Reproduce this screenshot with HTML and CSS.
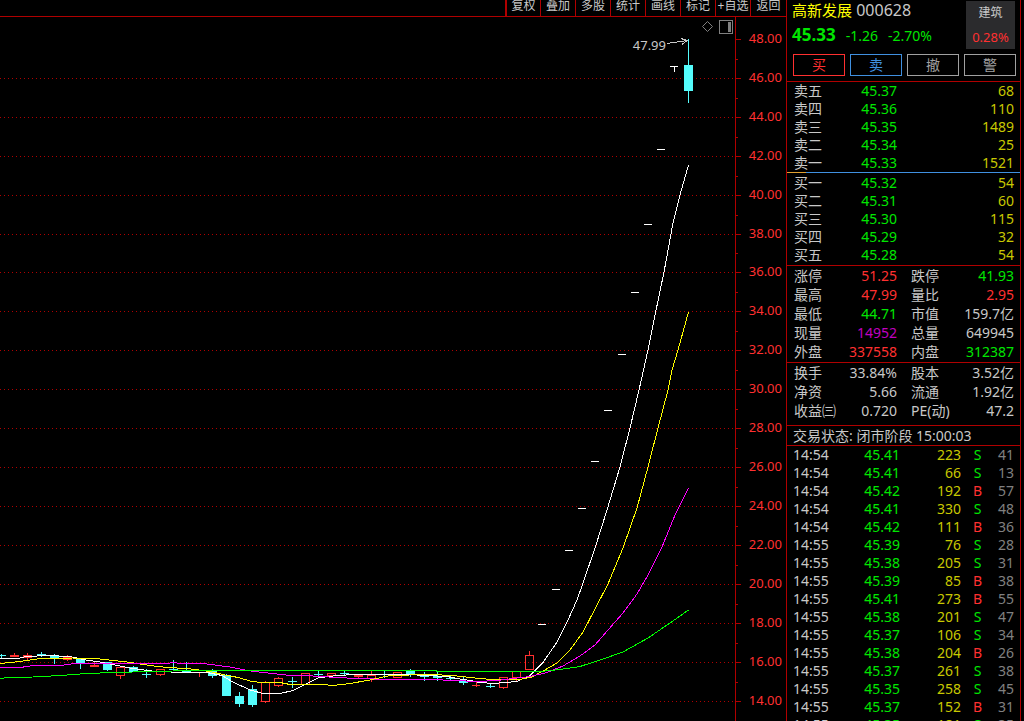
FILE: index.html
```html
<!DOCTYPE html>
<html lang="zh-CN">
<head>
<meta charset="utf-8">
<title>高新发展 000628</title>
<link rel="stylesheet" href="styles.css">
</head>
<body>
<div class="app">
  <main class="main">
    <nav class="toolbar">
      <button>复权</button><button>叠加</button><button>多股</button><button>统计</button><button>画线</button><button>标记</button><button>+自选</button><button>返回</button>
    </nav>
    <svg class="chart" viewBox="0 17 786 704" role="img" aria-label="K线图">
      <path class="grid" d="M0 78.5H735M0 117.5H735M0 156.5H735M0 195.5H735M0 234.5H735M0 272.5H735M0 311.5H735M0 350.5H735M0 389.5H735M0 428.5H735M0 467.5H735M0 506.5H735M0 545.5H735M0 584.5H735M0 623.5H735M0 662.5H735M0 701.5H735"/>
      <path class="axis" d="M735.5 17V721M736 39.5h5M736 78.5h5M736 117.5h5M736 156.5h5M736 195.5h5M736 234.5h5M736 272.5h5M736 311.5h5M736 350.5h5M736 389.5h5M736 428.5h5M736 467.5h5M736 506.5h5M736 545.5h5M736 584.5h5M736 623.5h5M736 662.5h5M736 701.5h5M736 59.5h2M736 98.5h2M736 137.5h2M736 176.5h2M736 215.5h2M736 253.5h2M736 292.5h2M736 331.5h2M736 370.5h2M736 409.5h2M736 448.5h2M736 487.5h2M736 526.5h2M736 565.5h2M736 604.5h2M736 643.5h2M736 682.5h2"/>
      <g class="scale">
        <text x="782" y="43">48.00</text><text x="782" y="82">46.00</text><text x="782" y="121">44.00</text><text x="782" y="160">42.00</text><text x="782" y="199">40.00</text><text x="782" y="238">38.00</text><text x="782" y="276">36.00</text><text x="782" y="315">34.00</text><text x="782" y="354">32.00</text><text x="782" y="393">30.00</text><text x="782" y="432">28.00</text><text x="782" y="471">26.00</text><text x="782" y="510">24.00</text><text x="782" y="549">22.00</text><text x="782" y="588">20.00</text><text x="782" y="627">18.00</text><text x="782" y="666">16.00</text><text x="782" y="705">14.00</text>
      </g>
      <path class="down-fill" d="M37 654h9v2h-9zM50 656h9v3h-9zM76 658h9v6h-9zM103 662h9v8h-9zM129 667h9v5h-9zM182 670h9v2h-9zM208 671h9v5h-9zM222 675h9v21h-9zM235 696h9v8h-9zM248 689h9v16h-9zM406 670h9v5h-9zM433 676h9v2h-9zM459 681h9v2h-9zM684 65h9v26h-9z"/>
      <path class="down-line" d="M0 655.5h6M1.5 654v5M41.5 652v5M54.5 654v10M80.5 658v11M107.5 662v9M133.5 666v6M142 674.5h9M146.5 669v9M169 669.5h9M173.5 660v10M186.5 662v9M212.5 669v9M226.5 674v4M239.5 692v15M252.5 685v22M288 681.5h9M292.5 677v11M314 674.5h9M318.5 671v5M340 673.5h9M344.5 671v5M380 674.5h9M384.5 671v7M410.5 669v8M420 676.5h9M424.5 672v9M437.5 672v9M446 678.5h9M450.5 676v5M463.5 677v8M486 686.5h9M490.5 684v4M688.5 39v64"/>
      <path class="up-fill" d="M10 655h9v2h-9zM23 655h9v3h-9zM90 665h9v2h-9zM195 672h9v1h-9zM354 675h9v2h-9z"/>
      <path class="up-line" d="M14.5 653v3M27.5 653v7M63.5 657.5h8v2h-8zM67.5 655v2M67.5 660v1M94.5 662v3M116.5 667.5h8v8h-8zM120.5 676v3M156.5 669.5h8v5h-8zM160.5 675v1M199.5 672v5M261.5 682.5h8v19h-8zM265.5 681v1M265.5 702v1M274.5 678.5h8v7h-8zM278.5 677v1M278.5 686v1M301.5 673.5h8v11h-8zM327.5 673.5h8v2h-8zM358.5 677v1M367.5 675.5h8v3h-8zM371.5 671v4M371.5 679v3M393.5 672.5h8v5h-8zM472 685.5h8M476.5 681v6M499.5 677.5h8v10h-8zM503.5 688v1M512.5 671.5h8v6h-8zM516.5 678v3M525.5 655.5h8v14h-8zM529.5 651v4"/>
      <path class="limit" d="M538 624.5h8M552 589.5h8M565 550.5h8M578 508.5h8M591 461.5h8M604 410.5h8M618 354.5h8M631 292.5h8M644 224.5h8M657 149.5h8M670 66.5h8M674.5 67v5"/>
      <path class="ma ma5" d="M0 658.5L18 658.5 26 656.5 48 655.5 70 656.5 83 659.5 103 662.5 117 665.5 133 668.5 152 671 180 672.5 207 672.5 222 675.5 233 682 250 690 263 693.5 280 693.5 293 690.5 305 684.5 318 678 333 676 353 674.5 385 674.5 417 675 447 676.5 457 678.5 470 680.5 480 682.5 493 683.5 517 681.5 530 675.5 543 662.5 557 642 568 620 577 600 583 583 595 548 607 510 620 467 630 428 639 390 648 350 654 320 664 272 673 223 680 195 688.5 165"/>
      <path class="ma ma10" d="M0 663.5L10 662.5 20 661.5 40 658.5 73 658 100 659 123 661.5 137 663.5 150 665.5 167 667.5 187 668.5 210 671.5 225 675 238 677.5 250 681 260 682.5 280 682.5 290 684.5 323 684.5 333 685.5 350 683.5 370 680 390 675.5 430 674.5 453 675.5 470 677.5 497 680 520 679.5 532 677 543 671 557 663 570 650 583 632 608 584 623 548 637 508 648 467 658 428 668 390 672 370 678 350 688.5 312"/>
      <path class="ma ma20" d="M0 667.5L20 667.5 34 665.5 60 665.5 75 663.5 167 663.5 173 662.5 180 663.5 207 664 230 667 247 670.5 263 672.5 290 675.5 313 676 337 677.5 357 678.5 390 679.5 443 680 477 681.5 497 680.5 513 678.5 530 676.5 547 672.5 563 666 580 656 595 645 608 630 623 613 637 594 648 575 662 547 675 515 688.5 488"/>
      <path class="ma ma60" d="M0 678.5L8 677.5 33 677 60 675.5 87 673.5 113 672.5 153 671.5 193 670.5 247 671 285 670.5 390 670.5 483 671.5 533 672 540 671.5 560 669.5 580 666.5 603 659 623 652 648 638 670 623 688.5 610"/>
      <text class="peak" x="666" y="50">47.99</text>
      <path class="arrow" d="M667 43.5L687 40.5M681 38.5L687 40.5 682 44.5"/>
      <path class="tool diamond" d="M707.5 21.5l5 5-5 5-5-5z"/>
      <path class="tool" d="M719.5 20.5h13v13h-13z"/>
      <path class="tool-fill" d="M728 22h3v10h-3z"/>
    </svg>
  </main>

  <aside class="quote">
    <header class="head">
      <div class="title">
        <h1><span class="name">高新发展</span> 000628</h1>
        <p class="price"><strong>45.33</strong><span>-1.26</span><span>-2.70%</span></p>
      </div>
      <a class="sector" href="#"><span>建筑</span><span class="r">0.28%</span></a>
    </header>
    <div class="actions">
      <button class="buy">买</button><button class="sell">卖</button><button>撤</button><button>警</button>
    </div>

    <table class="book asks">
      <tr><th>卖五</th><td class="g">45.37</td><td class="y">68</td></tr>
      <tr><th>卖四</th><td class="g">45.36</td><td class="y">110</td></tr>
      <tr><th>卖三</th><td class="g">45.35</td><td class="y">1489</td></tr>
      <tr><th>卖二</th><td class="g">45.34</td><td class="y">25</td></tr>
      <tr><th>卖一</th><td class="g">45.33</td><td class="y">1521</td></tr>
    </table>
    <div class="ratio"></div>
    <table class="book bids">
      <tr><th>买一</th><td class="g">45.32</td><td class="y">54</td></tr>
      <tr><th>买二</th><td class="g">45.31</td><td class="y">60</td></tr>
      <tr><th>买三</th><td class="g">45.30</td><td class="y">115</td></tr>
      <tr><th>买四</th><td class="g">45.29</td><td class="y">32</td></tr>
      <tr><th>买五</th><td class="g">45.28</td><td class="y">54</td></tr>
    </table>
    <table class="stats">
      <tr><th>涨停</th><td class="r">51.25</td><th>跌停</th><td class="g">41.93</td></tr>
      <tr><th>最高</th><td class="r">47.99</td><th>量比</th><td class="r">2.95</td></tr>
      <tr><th>最低</th><td class="g">44.71</td><th>市值</th><td>159.7亿</td></tr>
      <tr><th>现量</th><td class="m">14952</td><th>总量</th><td>649945</td></tr>
      <tr><th>外盘</th><td class="r">337558</td><th>内盘</th><td class="g">312387</td></tr>
    </table>
    <table class="stats basics">
      <tr><th>换手</th><td>33.84%</td><th>股本</th><td>3.52亿</td></tr>
      <tr><th>净资</th><td>5.66</td><th>流通</th><td>1.92亿</td></tr>
      <tr><th>收益㈢</th><td>0.720</td><th>PE(动)</th><td>47.2</td></tr>
    </table>
    <p class="status">交易状态: 闭市阶段 15:00:03</p>
    <table class="ticks">
      <tr><th>14:54</th><td class="g">45.41</td><td class="y">223</td><td class="g">S</td><td>41</td></tr>
      <tr><th>14:54</th><td class="g">45.41</td><td class="y">66</td><td class="g">S</td><td>13</td></tr>
      <tr><th>14:54</th><td class="g">45.42</td><td class="y">192</td><td class="r">B</td><td>57</td></tr>
      <tr><th>14:54</th><td class="g">45.41</td><td class="y">330</td><td class="g">S</td><td>48</td></tr>
      <tr><th>14:54</th><td class="g">45.42</td><td class="y">111</td><td class="r">B</td><td>36</td></tr>
      <tr><th>14:55</th><td class="g">45.39</td><td class="y">76</td><td class="g">S</td><td>28</td></tr>
      <tr><th>14:55</th><td class="g">45.38</td><td class="y">205</td><td class="g">S</td><td>31</td></tr>
      <tr><th>14:55</th><td class="g">45.39</td><td class="y">85</td><td class="r">B</td><td>38</td></tr>
      <tr><th>14:55</th><td class="g">45.41</td><td class="y">273</td><td class="r">B</td><td>55</td></tr>
      <tr><th>14:55</th><td class="g">45.38</td><td class="y">201</td><td class="g">S</td><td>47</td></tr>
      <tr><th>14:55</th><td class="g">45.37</td><td class="y">106</td><td class="g">S</td><td>34</td></tr>
      <tr><th>14:55</th><td class="g">45.38</td><td class="y">204</td><td class="r">B</td><td>26</td></tr>
      <tr><th>14:55</th><td class="g">45.37</td><td class="y">261</td><td class="g">S</td><td>38</td></tr>
      <tr><th>14:55</th><td class="g">45.35</td><td class="y">258</td><td class="g">S</td><td>45</td></tr>
      <tr><th>14:55</th><td class="g">45.37</td><td class="y">152</td><td class="r">B</td><td>31</td></tr>
      <tr><th>14:55</th><td class="g">45.35</td><td class="y">181</td><td class="g">S</td><td>35</td></tr>
    </table>
  </aside>
</div>
</body>
</html>
```
FILE: styles.css
```css
:root {
  --line: #b00000;
  --text: #c8c8c8;
  --red: #ff3030;
  --green: #00e600;
  --yellow: #c8c800;
  --gray: #808080;
}

* { box-sizing: border-box; }

body {
  margin: 0;
  background: #000;
  color: var(--text);
  font: 14px/18px "Noto Sans", "Noto Sans CJK SC", sans-serif;
}

button { font: inherit; background: none; }

.app {
  display: grid;
  grid-template-columns: 1fr 238px;
  height: 100vh;
  overflow: hidden;
}

.main { min-width: 0; }

/* toolbar */
.toolbar {
  display: flex;
  justify-content: flex-end;
  height: 17px;
  border-bottom: 1px solid var(--line);
}
.toolbar button {
  width: 35px;
  padding: 0 0 4px;
  border: 0;
  border-left: 1px solid var(--line);
  color: var(--text);
  font-size: 12px;
  line-height: 12px;
  white-space: nowrap;
}
.toolbar button:first-child { border-left-width: 2px; }
.toolbar button:last-child { width: 36px; }

/* chart */
.chart { display: block; width: 100%; }
.chart path { fill: none; shape-rendering: crispEdges; }
.chart .grid { stroke: var(--line); stroke-dasharray: 1 3; }
.chart .axis { stroke: var(--line); }
.chart .down-fill { fill: #54fcfc; }
.chart .down-line { stroke: #54fcfc; }
.chart .up-fill { fill: var(--red); }
.chart .up-line { stroke: var(--red); }
.chart .limit, .chart .ma5 { stroke: #fff; }
.chart .ma10 { stroke: #ff0; }
.chart .ma20 { stroke: #f0f; }
.chart .ma60 { stroke: #0f0; }
.chart .arrow { stroke: var(--text); }
.chart .tool { stroke: var(--gray); }
.chart .diamond { shape-rendering: auto; }
.chart .tool-fill { fill: var(--gray); }
.chart text { font-size: 13px; text-anchor: end; fill: var(--red); }
.chart .peak { fill: var(--text); }

/* quote panel */
.quote {
  margin-right: 3px;
  border: solid var(--line);
  border-width: 0 1px;
  overflow: hidden;
}
.head {
  display: flex;
  justify-content: space-between;
  height: 54px;
  padding: 1px 5px 5px;
}
h1 {
  margin: 0;
  font-size: 16px;
  line-height: 18px;
  font-weight: 400;
}
.name { color: #ff0; font-size: 15px; }
.price {
  display: flex;
  align-items: baseline;
  gap: 10px;
  margin: 6px 0 0;
  line-height: 20px;
  color: var(--green);
}
.price strong { font-size: 17px; }
.sector {
  display: flex;
  flex-direction: column;
  width: 49px;
  background: #2b2b2d;
  color: var(--text);
  font-size: 13px;
  line-height: 24px;
  text-align: center;
  text-decoration: none;
}
.sector span:first-child { font-size: 12px; }
.actions {
  display: grid;
  grid-template-columns: repeat(4, 1fr);
  gap: 5px;
  padding: 0 4px 5px 6px;
  border-bottom: 1px solid var(--line);
}
.actions button {
  height: 22px;
  padding: 0;
  border: 1px solid #a0a0a0;
  color: #a0a0a0;
  line-height: 20px;
}
.actions .buy { border-color: var(--red); color: var(--red); }
.actions .sell { border-color: #4090e0; color: #4090e0; }

/* tables */
table {
  width: 100%;
  table-layout: fixed;
  border-spacing: 0;
}
th, td {
  height: 18px;
  padding: 0 1px 0 0;
  font-weight: 400;
  line-height: 18px;
  text-align: right;
  white-space: nowrap;
}
th { text-align: left; }
th:first-child { width: 50px; padding-left: 7px; }
td:last-child { padding-right: 6px; }
.book td:nth-child(2), .stats td:nth-child(2) { width: 61px; }
.ratio {
  height: 1px;
  margin-bottom: 1px;
  background: linear-gradient(90deg, #e0a030 8%, #4090e0 8%);
}
.bids, .stats {
  padding-bottom: 1px;
  border-bottom: 1px solid var(--line);
}
.stats th, .stats td { height: 19px; line-height: 19px; }
.stats th:nth-child(3) { width: 60px; padding-left: 13px; }
.basics { padding-bottom: 5px; }
.status {
  margin: 0;
  padding: 0 6px;
  border-bottom: 1px solid var(--line);
  line-height: 19px;
}
.ticks th:first-child { padding-left: 6px; }
.ticks td:nth-child(2) { width: 64px; }
.ticks td:nth-child(3) { width: 61px; }
.ticks td:nth-child(4) { width: 32px; text-align: center; }
.ticks td:last-child { color: var(--gray); }

.r { color: var(--red); }
.g { color: var(--green); }
.y { color: var(--yellow); }
.m { color: #c000c0; }
```
